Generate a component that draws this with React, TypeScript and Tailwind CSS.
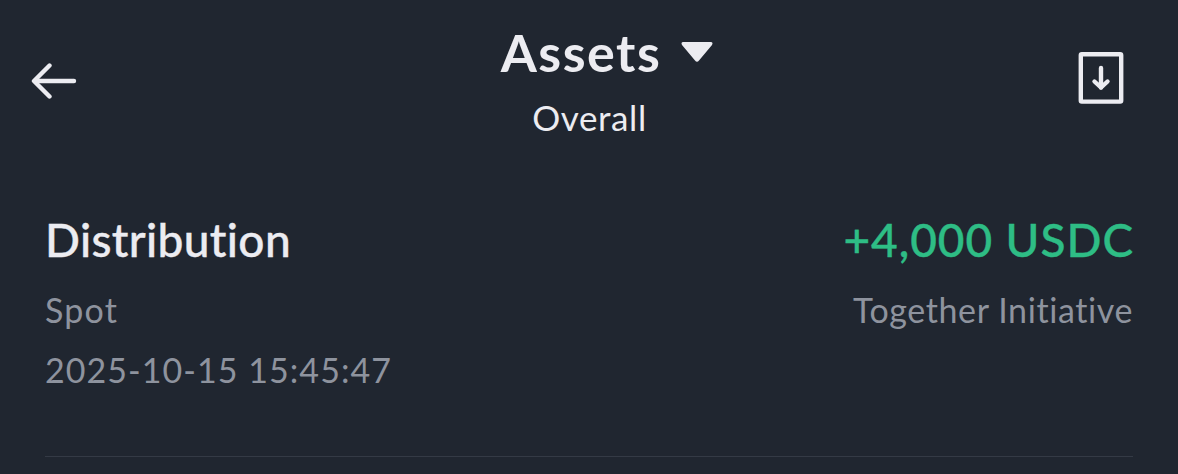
import React from 'react';

const transaction = {
  type: 'Distribution',
  account: 'Spot',
  time: '2025-10-15 15:45:47',
  amount: '+4,000 USDC',
  note: 'Together Initiative',
};

function BackIcon() {
  return (
    <svg width="46" height="38" viewBox="0 0 46 38" fill="none" stroke="#ececf1" strokeWidth="4.4" strokeLinecap="round" strokeLinejoin="round">
      <path d="M18.5 3.5L3 19L18.5 34.5" />
      <path d="M4 19H43" />
    </svg>
  );
}

function DownloadIcon() {
  return (
    <svg width="46" height="52" viewBox="0 0 46 52" fill="none" stroke="#ececf1" strokeWidth="4.4" strokeLinecap="round" strokeLinejoin="round">
      <rect x="2.8" y="2.2" width="40.4" height="47.4" rx="1" />
      <path d="M23 16V35.5" />
      <path d="M16.5 29.5L23 35.5L29.5 29.5" />
    </svg>
  );
}

function Header() {
  return (
    <header className="flex justify-between items-start h-[209px] pl-[31px] pr-[54px]">
      <button aria-label="Back" className="w-[46px] mt-[62px]">
        <BackIcon />
      </button>
      <div className="flex flex-col items-center ml-[24px]">
        <h1 className="flex items-center pl-[35px] mt-[22px] h-[60px]">
          <span className="text-[52px] leading-[60px] font-bold tracking-[1.5px] whitespace-nowrap">Assets</span>
          <svg className="ml-[20px]" width="32" height="22" viewBox="0 0 32 22" fill="#ececf1">
            <path d="M2.5 1H29.5Q32.5 1 31 4L18 19.5Q16 22 14 19.5L1 4Q-0.5 1 2.5 1Z" />
          </svg>
        </h1>
        <p className="mt-[12px] text-[35px] leading-[46px] tracking-[0.6px]">Overall</p>
      </div>
      <button aria-label="Download" className="w-[46px] mt-[52px]">
        <DownloadIcon />
      </button>
    </header>
  );
}

export default function App() {
  return (
    <div className="w-full h-[474px] overflow-hidden bg-[#202630] text-[#ececf1] font-['Lato',sans-serif] [font-variant-ligatures:none]">
      <Header />
      <main className="mx-[45px] h-[248px] border-b border-[#343a45]">
        <div className="flex justify-between h-[60px] items-center text-[46px] font-medium [-webkit-text-stroke:0.4px]">
          <h2 className="tracking-[0.35px]">{transaction.type}</h2>
          <span className="tracking-[0.95px] -mr-px text-[#2ebd85]">{transaction.amount}</span>
        </div>
        <div className="flex justify-between h-[60px] mt-[11px] text-[34px] leading-[60px] text-[#8e939e]">
          <span className="tracking-[1.2px]">{transaction.account}</span>
          <span className="tracking-[0.6px]">{transaction.note}</span>
        </div>
        <time className="block text-[34px] leading-[60px] tracking-[1.05px] text-[#8e939e]">{transaction.time}</time>
      </main>
    </div>
  );
}
